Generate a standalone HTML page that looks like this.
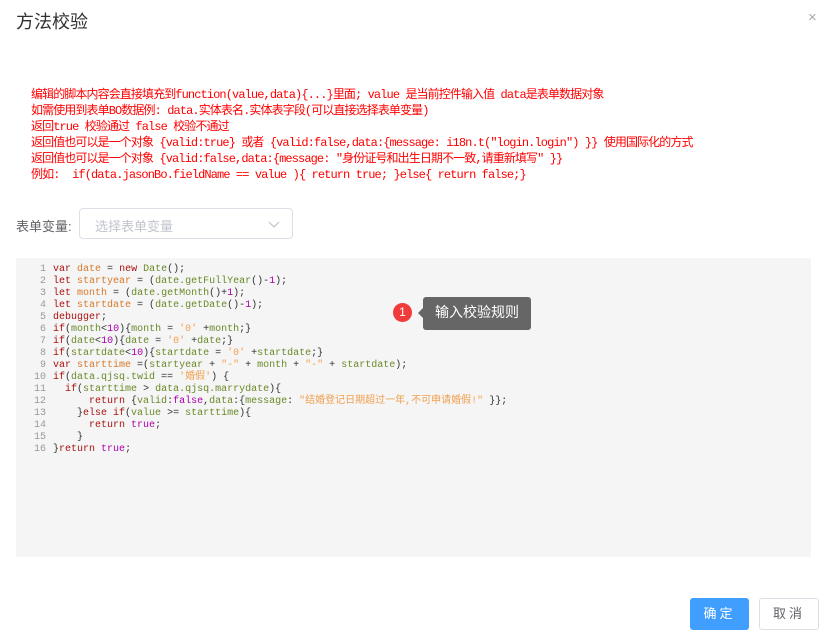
<!DOCTYPE html>
<html><head><meta charset="utf-8"><style>
body{margin:0;width:829px;height:638px;background:#fff;position:relative;overflow:hidden;font-family:"Liberation Sans","Noto Sans CJK SC",sans-serif}
.t{position:absolute;left:16px;top:8px;font-size:18px;color:#303133}
.x{position:absolute;left:808px;top:9px;font-size:15px;color:#aaa}
.red{position:absolute;left:31px;top:87px;color:#f00;font-family:"Liberation Mono","Noto Sans CJK SC",monospace;font-size:12px;line-height:16px;white-space:pre;letter-spacing:-0.9px}
.lbl{position:absolute;left:16px;top:216px;font-size:13px;color:#606266}
.sel{position:absolute;left:79px;top:208px;width:214px;height:31px;border:1px solid #dcdfe6;border-radius:4px;box-sizing:border-box}
.sel span{position:absolute;left:15px;top:7px;font-size:13px;color:#c0c4cc}
.sel svg{position:absolute;right:12px;top:12px}
.code{position:absolute;left:16px;top:258px;width:795px;height:299px;background:#f5f5f5}
.ln{position:absolute;left:0;top:6px;width:30px;text-align:right;color:#999;font-family:"Liberation Mono",monospace;font-size:10px;line-height:12px;white-space:pre}
.src{position:absolute;left:37px;top:6px;font-family:"Liberation Mono","Noto Sans CJK SC",monospace;font-size:10px;line-height:12px;white-space:pre;color:#333}
.k{color:#a11}.v{color:#d57a2a}.f{color:#6a8a2a}.n{color:#a0a}.s{color:#f0a050}
.badge{position:absolute;left:393px;top:303px;width:19px;height:19px;border-radius:50%;background:#f03b3b;color:#fff;font-size:12px;text-align:center;line-height:19px}
.tip{position:absolute;left:423px;top:297px;width:108px;height:33px;background:#666;border-radius:3px;color:#fff;font-size:14px;line-height:31px;text-align:center}
.tip:before{content:"";position:absolute;left:-5px;top:11px;border:5px solid transparent;border-left:0;border-right-color:#666}
.b1{position:absolute;left:690px;top:598px;width:59px;height:32px;background:#409eff;border-radius:3px;color:#fff;font-size:13px;text-align:center;line-height:32px;letter-spacing:3px}
.b2{position:absolute;left:759px;top:598px;width:60px;height:32px;border:1px solid #dcdfe6;box-sizing:border-box;border-radius:3px;color:#606266;font-size:13px;text-align:center;line-height:30px;letter-spacing:3px}
</style></head><body>
<div class="t">方法校验</div>
<div class="x">×</div>
<div class="red">编辑的脚本内容会直接填充到function(value,data){...}里面; value 是当前控件输入值 data是表单数据对象
如需使用到表单BO数据例: data.实体表名.实体表字段(可以直接选择表单变量)
返回true 校验通过 false 校验不通过
返回值也可以是一个对象 {valid:true} 或者 {valid:false,data:{message: i18n.t("login.login") }} 使用国际化的方式
返回值也可以是一个对象 {valid:false,data:{message: "身份证号和出生日期不一致,请重新填写" }}
例如:  if(data.jasonBo.fieldName == value ){ return true; }else{ return false;}</div>
<div class="lbl">表单变量:</div>
<div class="sel"><span>选择表单变量</span><svg width="12" height="8"><path d="M1 1L6 6L11 1" fill="none" stroke="#c0c4cc" stroke-width="1.2"/></svg></div>
<div class="code">
<div class="ln">1
2
3
4
5
6
7
8
9
10
11
12
13
14
15
16</div>
<div class="src"><span class="k">var</span> <span class="v">date</span> = <span class="k">new</span> <span class="f">Date</span>();
<span class="k">let</span> <span class="v">startyear</span> = (<span class="f">date.getFullYear</span>()-<span class="n">1</span>);
<span class="k">let</span> <span class="v">month</span> = (<span class="f">date.getMonth</span>()+<span class="n">1</span>);
<span class="k">let</span> <span class="v">startdate</span> = (<span class="f">date.getDate</span>()-<span class="n">1</span>);
<span class="k">debugger</span>;
<span class="k">if</span>(<span class="f">month</span>&lt;<span class="n">10</span>){<span class="f">month</span> = <span class="s">'0'</span> +<span class="f">month</span>;}
<span class="k">if</span>(<span class="f">date</span>&lt;<span class="n">10</span>){<span class="f">date</span> = <span class="s">'0'</span> +<span class="f">date</span>;}
<span class="k">if</span>(<span class="f">startdate</span>&lt;<span class="n">10</span>){<span class="f">startdate</span> = <span class="s">'0'</span> +<span class="f">startdate</span>;}
<span class="k">var</span> <span class="v">starttime</span> =(<span class="f">startyear</span> + <span class="s">"-"</span> + <span class="f">month</span> + <span class="s">"-"</span> + <span class="f">startdate</span>);
<span class="k">if</span>(<span class="f">data.qjsq.twid</span> == <span class="s">'婚假'</span>) {
  <span class="k">if</span>(<span class="f">starttime</span> &gt; <span class="f">data.qjsq.marrydate</span>){
      <span class="k">return</span> {<span class="f">valid</span>:<span class="n">false</span>,<span class="f">data</span>:{<span class="f">message</span>: <span class="s">"结婚登记日期超过一年,不可申请婚假!"</span> }};
    }<span class="k">else if</span>(<span class="f">value</span> &gt;= <span class="f">starttime</span>){
      <span class="k">return</span> <span class="n">true</span>;
    }
}<span class="k">return</span> <span class="n">true</span>;</div>
</div>
<div class="badge">1</div>
<div class="tip">输入校验规则</div>
<div class="b1">确定</div>
<div class="b2">取消</div>
</body></html>
